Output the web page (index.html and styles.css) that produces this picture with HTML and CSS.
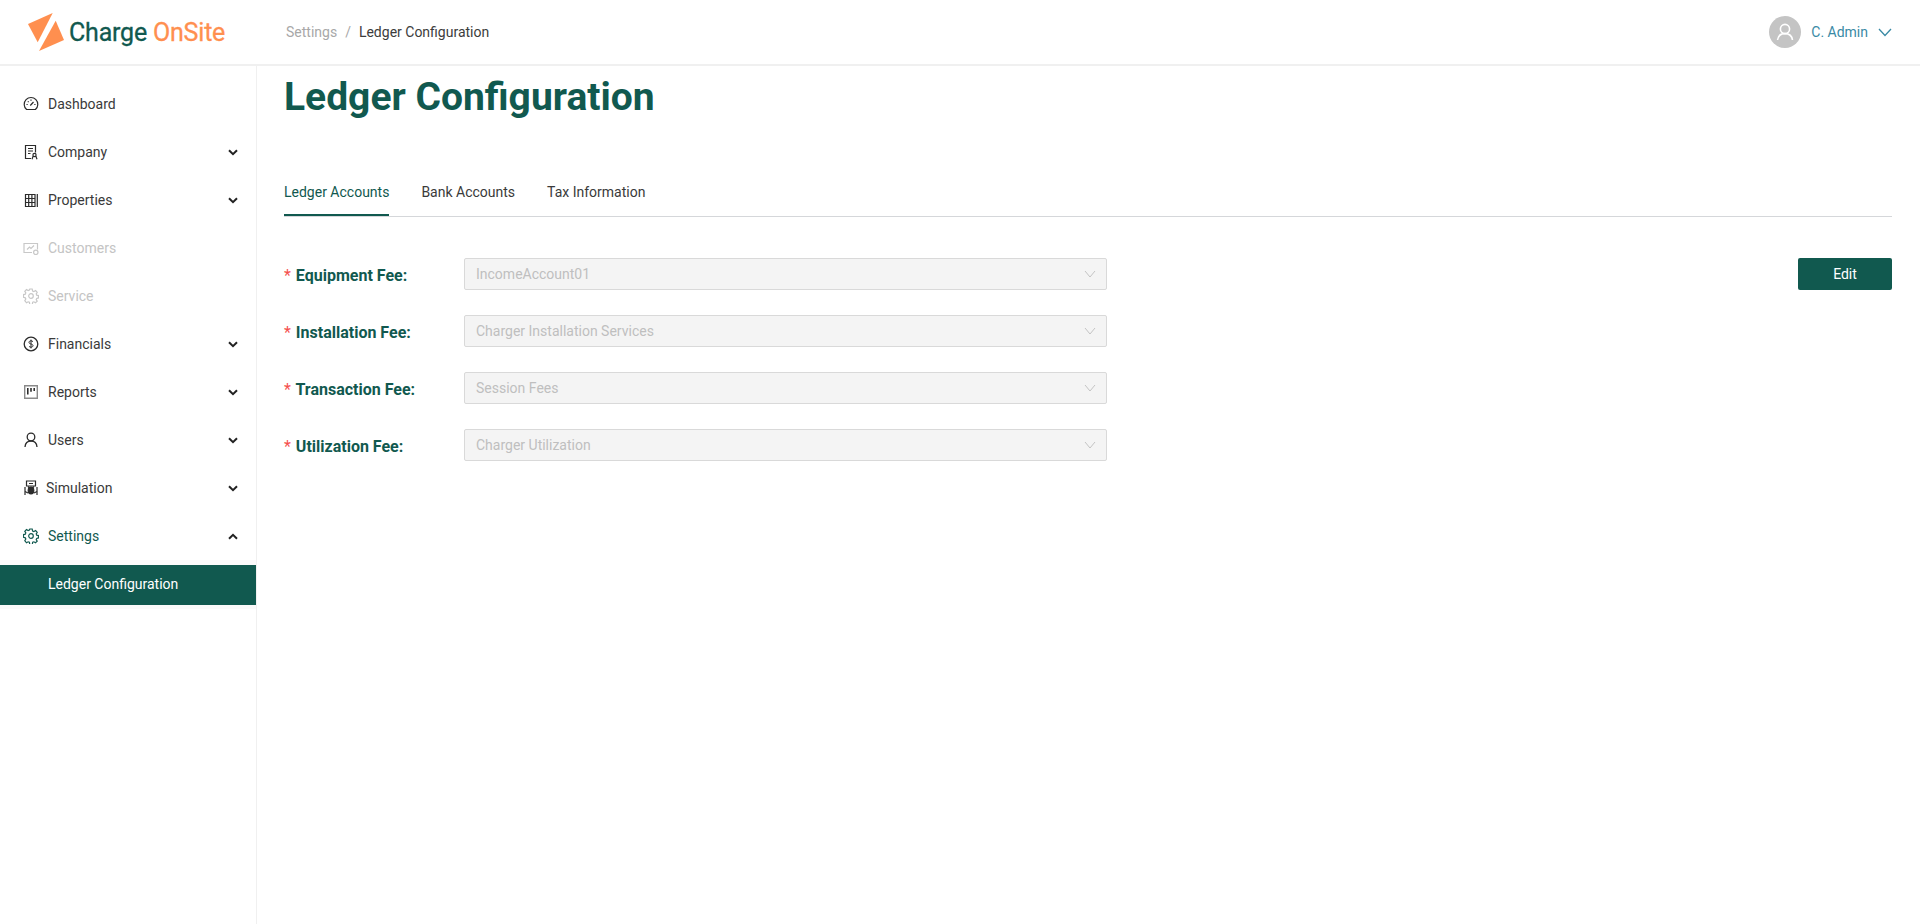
FILE: index.html
```html
<!DOCTYPE html>
<html lang="en">
<head>
<meta charset="utf-8">
<title>Ledger Configuration</title>
<link rel="stylesheet" href="styles.css">
</head>
<body>
<header class="topbar">
  <div class="brand">
    <svg class="logo" viewBox="0 0 40 40" width="40" height="40"><path fill="#ff8f4f" d="M2 12 L26.700 1 L11.700 30.300 Z"/><path fill="#ff8f4f" d="M29.700 8.700 L38 28 L13 39 Z"/></svg>
    <span class="brand-text"><span class="brand-a">Charge</span> <span class="brand-b">OnSite</span></span>
  </div>
  <nav class="crumbs"><span class="crumb-muted">Settings</span><span class="crumb-sep">/</span><span class="crumb-current">Ledger Configuration</span></nav>
  <div class="user">
    <span class="avatar"><svg viewBox="0 0 32 32" width="32" height="32" fill="none" stroke="#fff" stroke-width="1.6"><circle cx="16" cy="13" r="4.6"/><path d="M8.500 24c.6-4.400 3.400-6.400 7.500-6.400s6.900 2 7.500 6.400"/></svg></span>
    <span class="user-name">C. Admin</span>
    <svg class="user-caret" viewBox="0 0 14 9" width="14" height="9" fill="none" stroke="#3a8aa5" stroke-width="1.3"><path d="M1 1l6 6.500L13 1"/></svg>
  </div>
</header>
<div class="shell">
  <aside class="sidebar">
    <a class="item"><svg class="ico" viewBox="0 0 16 16" fill="none" stroke="#2b2b2b" stroke-width="1.2"><path d="M3.600 13.500a6.800 6.800 0 1 1 8.800 0z"/><path d="M7.300 9.500l3.200-3.500M3.500 8.500h1.200M11.300 8.500h1.200M8 3.500v1.200M4.800 5.300l.8.8"/></svg><span>Dashboard</span></a>
    <a class="item"><svg class="ico" viewBox="0 0 16 16" fill="none" stroke="#2b2b2b" stroke-width="1.2"><path d="M8 14.500H2.500v-13h10v7M5 4.500h5M5 7h5M5 9.500h2.500"/><circle cx="11.500" cy="11" r="1.600"/><path d="M9 15.200l1-2.700h3l1 2.700"/></svg><span>Company</span><svg class="chev" viewBox="0 0 10 7" fill="none" stroke="#222" stroke-width="2"><path d="M1 1.200l4 4 4-4"/></svg></a>
    <a class="item"><svg class="ico" viewBox="0 0 16 16" fill="none" stroke="#2b2b2b" stroke-width="1.2"><path d="M2.500 2.500h9.500v12H2.500zM2.500 6.500H12M2.500 10.500H12M5.700 2.500v12M8.900 2.500v12M14.300 2v13"/></svg><span>Properties</span><svg class="chev" viewBox="0 0 10 7" fill="none" stroke="#222" stroke-width="2"><path d="M1 1.200l4 4 4-4"/></svg></a>
    <a class="item off"><svg class="ico" viewBox="0 0 16 16" fill="none" stroke="#c8c8c8" stroke-width="1.2"><path d="M9 12.500H1v-9h13.500v6M4 9.500l2.500-2.500 1.500 1.500 3-3"/><circle cx="12.800" cy="12.300" r="2.200"/></svg><span>Customers</span></a>
    <a class="item off"><svg class="ico" viewBox="0 0 16 16" fill="none" stroke="#c8c8c8" stroke-width="1.2"><circle cx="8" cy="8" r="2.300"/><path d="M6.800 1h2.400l.4 2 1.300.6 1.700-1 1.600 1.700-1 1.600.5 1.300 1.800.4v2.300l-1.800.5-.5 1.200 1 1.600-1.700 1.600-1.600-1-1.200.5-.4 2.200H6.800l-.4-2.200-1.300-.5-1.600 1L1.800 12.600l1-1.600-.5-1.200-1.800-.5V6.600l1.800-.4.5-1.300-1-1.600 1.700-1.700 1.600 1 1.300-.6z"/></svg><span>Service</span></a>
    <a class="item"><svg class="ico" viewBox="0 0 16 16" fill="none" stroke="#2b2b2b" stroke-width="1.3"><circle cx="8" cy="8" r="6.800"/><path d="M10 5.800c-.5-.7-1.200-1-2-1-1.100 0-2 .6-2 1.600s.9 1.300 2 1.600 2 .6 2 1.600-.9 1.600-2 1.600c-.9 0-1.600-.3-2-1M8 3.600v8.800" stroke-width="1"/></svg><span>Financials</span><svg class="chev" viewBox="0 0 10 7" fill="none" stroke="#222" stroke-width="2"><path d="M1 1.200l4 4 4-4"/></svg></a>
    <a class="item"><svg class="ico" viewBox="0 0 16 16" fill="none"><path stroke="#8a8a8a" stroke-width="1.4" d="M1.700 1.700h12.600v12.600H1.700z"/><path stroke="#222" stroke-width="1.5" d="M4.800 4v6.500M8 4v3.800M11.200 4v3"/></svg><span>Reports</span><svg class="chev" viewBox="0 0 10 7" fill="none" stroke="#222" stroke-width="2"><path d="M1 1.200l4 4 4-4"/></svg></a>
    <a class="item"><svg class="ico" viewBox="0 0 16 16" fill="none" stroke="#2b2b2b" stroke-width="1.3"><circle cx="8" cy="5" r="3.800"/><path d="M2 15c.3-3.900 2.500-6 6-6s5.700 2.100 6 6"/></svg><span>Users</span><svg class="chev" viewBox="0 0 10 7" fill="none" stroke="#222" stroke-width="2"><path d="M1 1.200l4 4 4-4"/></svg></a>
    <a class="item sim"><svg class="ico" viewBox="0 0 16 16" fill="none" stroke="#2b2b2b" stroke-width="1.2"><path d="M3.500 1h9v5h-9zM2 7v8M14 7v8M6 3.500h4"/><ellipse cx="8" cy="10.500" rx="2.800" ry="3.400" fill="#2b2b2b"/><path d="M2 11.500l3 1.500M14 11.500l-3 1.500M5 6.500l1.500 1.500M11 6.500L9.500 8"/></svg><span>Simulation</span><svg class="chev" viewBox="0 0 10 7" fill="none" stroke="#222" stroke-width="2"><path d="M1 1.200l4 4 4-4"/></svg></a>
    <a class="item open"><svg class="ico" viewBox="0 0 16 16" fill="none" stroke="#11594f" stroke-width="1.2"><circle cx="8" cy="8" r="2.300"/><path d="M6.800 1h2.400l.4 2 1.300.6 1.700-1 1.600 1.700-1 1.600.5 1.300 1.800.4v2.300l-1.800.5-.5 1.200 1 1.600-1.700 1.600-1.600-1-1.200.5-.4 2.200H6.800l-.4-2.200-1.300-.5-1.600 1L1.800 12.600l1-1.600-.5-1.200-1.800-.5V6.600l1.800-.4.5-1.300-1-1.600 1.700-1.700 1.600 1 1.300-.6z"/></svg><span>Settings</span><svg class="chev" viewBox="0 0 10 7" fill="none" stroke="#222" stroke-width="2"><path d="M1 5.800l4-4 4 4"/></svg></a>
    <div class="sub"><a class="item active"><span>Ledger Configuration</span></a></div>
  </aside>
  <main class="main">
    <h1 class="title">Ledger Configuration</h1>
    <div class="tabs">
      <a class="tab current">Ledger Accounts</a>
      <a class="tab">Bank Accounts</a>
      <a class="tab">Tax Information</a>
    </div>
    <div class="content">
      <form class="form">
        <div class="row"><label class="label"><i>*</i> Equipment Fee:</label><div class="select"><span>IncomeAccount01</span><svg viewBox="0 0 12 8" width="12" height="8" fill="none" stroke="#c4c4c4" stroke-width="1"><path d="M1 1l5 6 5-6"/></svg></div></div>
        <div class="row"><label class="label"><i>*</i> Installation Fee:</label><div class="select"><span>Charger Installation Services</span><svg viewBox="0 0 12 8" width="12" height="8" fill="none" stroke="#c4c4c4" stroke-width="1"><path d="M1 1l5 6 5-6"/></svg></div></div>
        <div class="row"><label class="label"><i>*</i> Transaction Fee:</label><div class="select"><span>Session Fees</span><svg viewBox="0 0 12 8" width="12" height="8" fill="none" stroke="#c4c4c4" stroke-width="1"><path d="M1 1l5 6 5-6"/></svg></div></div>
        <div class="row"><label class="label"><i>*</i> Utilization Fee:</label><div class="select"><span>Charger Utilization</span><svg viewBox="0 0 12 8" width="12" height="8" fill="none" stroke="#c4c4c4" stroke-width="1"><path d="M1 1l5 6 5-6"/></svg></div></div>
      </form>
      <button class="edit" type="button">Edit</button>
    </div>
  </main>
</div>
</body>
</html>
```
FILE: styles.css
```css
* { box-sizing: border-box; }
html, body { margin: 0; height: 100%; }
body { font-family: Roboto, "Liberation Sans", sans-serif; font-size: 14px; color: #2b2b2b; background: #fff; overflow: hidden; }
.topbar { height: 66px; display: flex; align-items: center; border-bottom: 2px solid #f0f0f0; }
.brand { width: 286px; padding-left: 26px; display: flex; align-items: center; gap: 3px; }
.logo { display: block; }
.brand-text { font-size: 25px; letter-spacing: -0.2px; white-space: nowrap; -webkit-text-stroke: 0.3px; }
.brand-a { color: #11594f; }
.brand-b { color: #ff8f4f; }
.crumbs { flex: 1; display: flex; align-items: center; padding-bottom: 1px; }
.crumb-muted { color: #a8a8a8; }
.crumb-sep { color: #a8a8a8; margin: 0 8px; }
.crumb-current { color: #3c3c3c; }
.user { display: flex; align-items: center; padding-right: 28px; }
.avatar { width: 32px; height: 32px; border-radius: 50%; background: #c4c4c4; display: block; }
.avatar svg { display: block; }
.user-name { margin-left: 10px; padding-bottom: 1px; color: #3a8aa5; }
.user-caret { margin-left: 10px; }
.shell { display: flex; height: 858px; }
.sidebar { width: 257px; flex: none; border-right: 1px solid #f0f0f0; padding-top: 18px; }
.item { height: 40px; margin-bottom: 8px; padding: 0 18px 0 23px; display: flex; align-items: center; color: #3a3a3a; line-height: 20px; }
.item span { flex: 1; margin-left: 9px; }
.ico { width: 16px; height: 16px; flex: none; }
.chev { width: 10px; height: 7px; flex: none; }
.off { color: #c4c4c4; }
.sim span { margin-left: 7px; }
.open { color: #11594f; }
.sub { background: #fafafa; margin-top: -4px; padding: 5px 0 4px; }
.active { background: #11594f; color: #fff; margin-bottom: 0; padding-left: 48px; padding-bottom: 2px; }
.active span { margin-left: 0; }
.main { flex: 1; min-width: 0; padding: 0 28px 0 27px; }
.title { margin: 8px 0 0; font-size: 39px; line-height: 46px; font-weight: 700; color: #11594f; }
.tabs { margin-top: 48px; display: flex; gap: 32px; border-bottom: 1px solid #d5d7da; height: 49px; }
.tab { height: 48px; line-height: 48px; color: #3a3a3a; }
.current { color: #11594f; border-bottom: 2px solid #11594f; }
.content { display: flex; justify-content: space-between; align-items: flex-start; padding-top: 41px; }
.form { display: flex; flex-direction: column; gap: 25px; }
.row { display: flex; height: 32px; }
.label { width: 180px; font-size: 16px; font-weight: 700; color: #11594f; line-height: 35px; }
.label i { color: #f5504e; font-style: normal; font-weight: 400; margin-right: 1px; }
.select { width: 643px; height: 32px; padding: 0 10px 1px 11px; background: #f4f4f4; border: 1px solid #d9d9d9; border-radius: 2px; display: flex; align-items: center; justify-content: space-between; color: #bfbfbf; }
.edit { width: 94px; height: 32px; background: #11594f; border: 0; border-radius: 2px; color: #fff; font: 400 14px Roboto, sans-serif; }
```
